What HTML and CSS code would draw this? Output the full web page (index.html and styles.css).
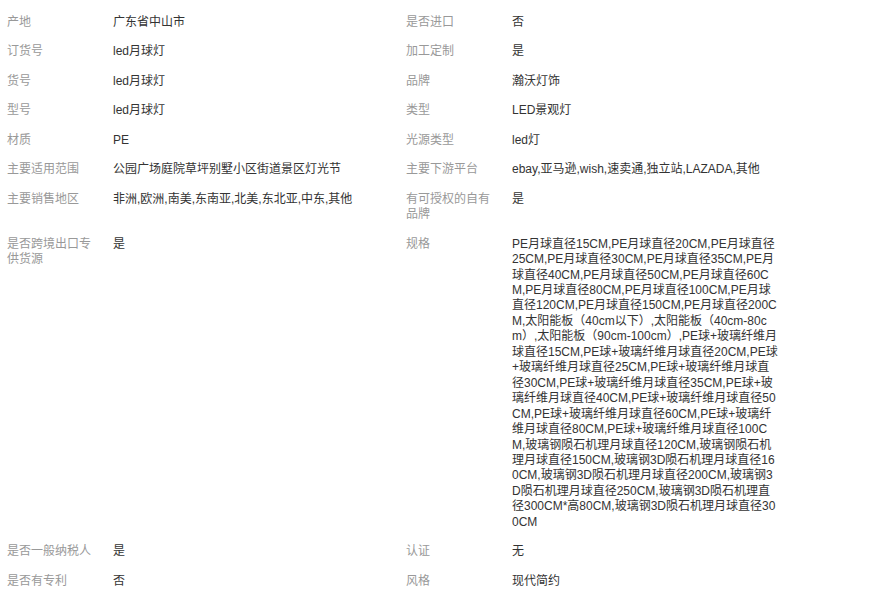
FILE: index.html
```html
<!DOCTYPE html>
<html lang="zh-CN">
<head>
<meta charset="utf-8">
<title>产品属性</title>
<link rel="stylesheet" href="styles.css">
</head>
<body>
<div class="attrs">
  <div class="item"><div class="k">产地</div><div class="v">广东省中山市</div></div>
  <div class="item"><div class="k">是否进口</div><div class="v">否</div></div>
  <div class="item"><div class="k">订货号</div><div class="v">led月球灯</div></div>
  <div class="item"><div class="k">加工定制</div><div class="v">是</div></div>
  <div class="item"><div class="k">货号</div><div class="v">led月球灯</div></div>
  <div class="item"><div class="k">品牌</div><div class="v">瀚沃灯饰</div></div>
  <div class="item"><div class="k">型号</div><div class="v">led月球灯</div></div>
  <div class="item"><div class="k">类型</div><div class="v">LED景观灯</div></div>
  <div class="item"><div class="k">材质</div><div class="v">PE</div></div>
  <div class="item"><div class="k">光源类型</div><div class="v">led灯</div></div>
  <div class="item"><div class="k">主要适用范围</div><div class="v">公园广场庭院草坪别墅小区街道景区灯光节</div></div>
  <div class="item"><div class="k">主要下游平台</div><div class="v">ebay,亚马逊,wish,速卖通,独立站,LAZADA,其他</div></div>
  <div class="item"><div class="k">主要销售地区</div><div class="v">非洲,欧洲,南美,东南亚,北美,东北亚,中东,其他</div></div>
  <div class="item"><div class="k">有可授权的自有品牌</div><div class="v">是</div></div>
  <div class="item"><div class="k">是否跨境出口专供货源</div><div class="v">是</div></div>
  <div class="item"><div class="k">规格</div><div class="v">PE月球直径15CM,PE月球直径20CM,PE月球直径25CM,PE月球直径30CM,PE月球直径35CM,PE月球直径40CM,PE月球直径50CM,PE月球直径60CM,PE月球直径80CM,PE月球直径100CM,PE月球直径120CM,PE月球直径150CM,PE月球直径200CM,太阳能板（40cm以下）,太阳能板（40cm-80cm）,太阳能板（90cm-100cm）,PE球+玻璃纤维月球直径15CM,PE球+玻璃纤维月球直径20CM,PE球+玻璃纤维月球直径25CM,PE球+玻璃纤维月球直径30CM,PE球+玻璃纤维月球直径35CM,PE球+玻璃纤维月球直径40CM,PE球+玻璃纤维月球直径50CM,PE球+玻璃纤维月球直径60CM,PE球+玻璃纤维月球直径80CM,PE球+玻璃纤维月球直径100CM,玻璃钢陨石机理月球直径120CM,玻璃钢陨石机理月球直径150CM,玻璃钢3D陨石机理月球直径160CM,玻璃钢3D陨石机理月球直径200CM,玻璃钢3D陨石机理月球直径250CM,玻璃钢3D陨石机理直径300CM*高80CM,玻璃钢3D陨石机理月球直径300CM</div></div>
  <div class="item"><div class="k">是否一般纳税人</div><div class="v">是</div></div>
  <div class="item"><div class="k">认证</div><div class="v">无</div></div>
  <div class="item"><div class="k">是否有专利</div><div class="v">否</div></div>
  <div class="item"><div class="k">风格</div><div class="v">现代简约</div></div>
</div>
</body>
</html>
```

FILE: styles.css
```css
html, body {
  margin: 0;
  padding: 0;
  background: #fff;
}
body {
  font-family: "Liberation Sans", "Noto Sans CJK SC", sans-serif;
  font-size: 12px;
  line-height: 15.45px;
  color: #333;
}
.attrs {
  display: grid;
  grid-template-columns: 399px 399px;
  padding: 8px 0 0 7px;
}
.item {
  display: grid;
  grid-template-columns: 94px 268px;
  column-gap: 12px;
  padding: 7px 0;
}
.k {
  color: #999;
}
.v {
  color: #333;
  word-break: break-all;
}
```
